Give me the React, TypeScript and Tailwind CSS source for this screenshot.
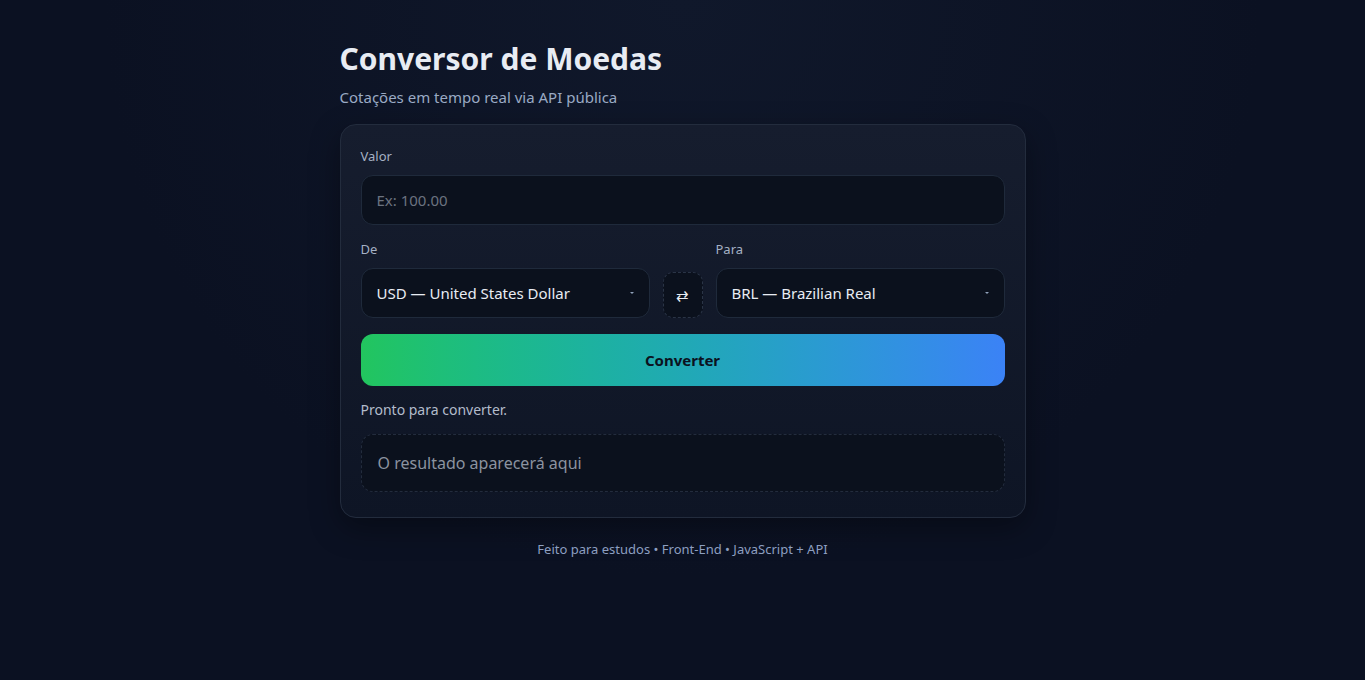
import React, { useState } from 'react';

const currencies = [
  { code: 'USD', name: 'United States Dollar' },
  { code: 'BRL', name: 'Brazilian Real' },
  { code: 'EUR', name: 'Euro' },
  { code: 'GBP', name: 'British Pound' },
];

const Caret = () => (
  <svg width="8" height="8" viewBox="0 0 8 8" className="pointer-events-none absolute right-[14px] top-1/2 -translate-y-1/2 text-slate-400">
    <path d="M2 3 L6 3 L4 5 Z" fill="currentColor" />
  </svg>
);

const App = () => {
  const [amount, setAmount] = useState('');
  const [from, setFrom] = useState('USD');
  const [to, setTo] = useState('BRL');

  const swap = () => {
    setFrom(to);
    setTo(from);
  };

  return (
    <div
      className="min-h-screen bg-[#0b1122] bg-[radial-gradient(ellipse_at_top,#10182b_0%,#0b1122_60%)] text-slate-100"
      style={{ fontFamily: '"Noto Sans", "Open Sans", sans-serif' }}
    >
      <div className="mx-auto w-[686px] pt-[37px]">
        {/* Header */}
        <h1 className="text-[30px] font-bold leading-[44px] text-[#e8ecf3]">Conversor de Moedas</h1>
        <p className="mt-[6px] text-[15px] leading-[20px] text-[#9aaac4]">Cotações em tempo real via API pública</p>

        {/* Card */}
        <div className="mt-[17px] rounded-[16px] border border-[#232c3d] bg-gradient-to-b from-[#161d2e] to-[#0e1525] px-[20px] pt-[22px] pb-[25px] shadow-[0_10px_30px_rgba(0,0,0,0.35)]">
          <label className="block text-[13px] leading-[18px] text-[#a5b1c4]">Valor</label>
          <input
            value={amount}
            onChange={(e) => setAmount(e.target.value)}
            placeholder="Ex: 100.00"
            className="mt-[10px] h-[50px] w-full rounded-[12px] border border-[#1f2a3b] bg-[#0b111d] px-[15px] text-[15px] text-slate-100 outline-none placeholder:text-[#6b7380]"
          />

          <div className="mt-[15px] flex items-end gap-[13px]">
            <div className="flex-1">
              <label className="block text-[13px] leading-[18px] text-[#a5b1c4]">De</label>
              <div className="relative mt-[10px]">
                <select
                  value={from}
                  onChange={(e) => setFrom(e.target.value)}
                  className="h-[50px] w-full appearance-none rounded-[12px] border border-[#1f2a3b] bg-[#0b111d] px-[15px] text-[15px] text-[#e8ecf3] outline-none"
                >
                  {currencies.map((c) => (
                    <option key={c.code} value={c.code}>
                      {c.code} — {c.name}
                    </option>
                  ))}
                </select>
                <Caret />
              </div>
            </div>

            <button
              onClick={swap}
              className="flex h-[46px] w-[40px] items-center justify-center rounded-[10px] border border-dashed border-[#2a3446] bg-[#0b111d] text-[15px] text-[#e8ecf3]"
              aria-label="Inverter moedas"
            >
              ⇄
            </button>

            <div className="flex-1">
              <label className="block text-[13px] leading-[18px] text-[#a5b1c4]">Para</label>
              <div className="relative mt-[10px]">
                <select
                  value={to}
                  onChange={(e) => setTo(e.target.value)}
                  className="h-[50px] w-full appearance-none rounded-[12px] border border-[#1f2a3b] bg-[#0b111d] px-[15px] text-[15px] text-[#e8ecf3] outline-none"
                >
                  {currencies.map((c) => (
                    <option key={c.code} value={c.code}>
                      {c.code} — {c.name}
                    </option>
                  ))}
                </select>
                <Caret />
              </div>
            </div>
          </div>

          <button className="mt-[16px] h-[52px] w-full rounded-[12px] bg-gradient-to-r from-[#22c55e] to-[#3b82f6] text-[15px] font-bold text-[#0b1220]">
            Converter
          </button>

          <p className="mt-[14px] text-[14px] leading-[20px] text-[#b3bccb]">Pronto para converter.</p>

          <div className="mt-[14px] flex h-[58px] items-center rounded-[12px] border border-dashed border-[#232c3d] bg-[#0b111d] px-[16px] text-[16px] text-[#8b93a0]">
            O resultado aparecerá aqui
          </div>
        </div>

        <p className="mt-[22px] text-center text-[13px] leading-[18px] text-[#8d9fc0]">
          Feito para estudos • Front-End • JavaScript + API
        </p>
      </div>
    </div>
  );
};

export default App;
